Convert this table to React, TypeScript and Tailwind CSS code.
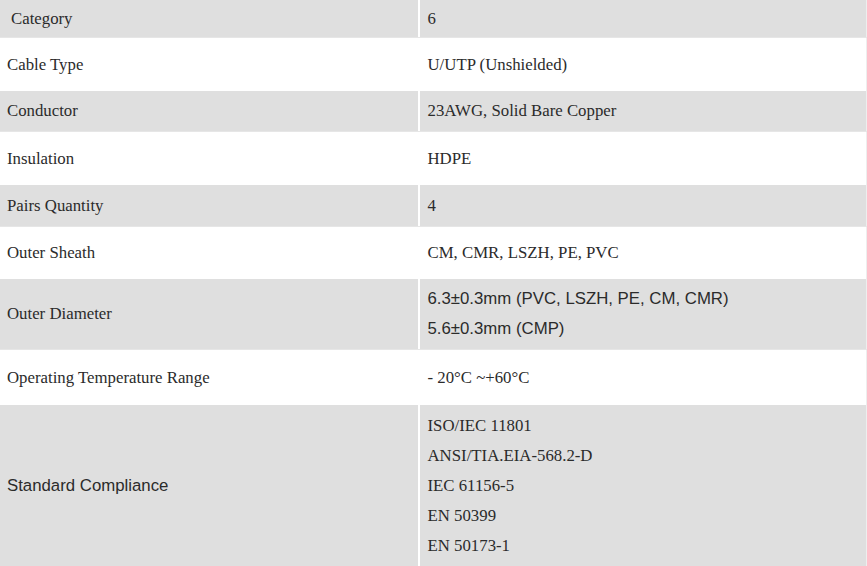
const serif = "font-['Liberation_Serif','Times_New_Roman',serif]";
const sans = "font-['Liberation_Sans',Arial,sans-serif]";

type Row = {
  label: string;
  values: string[];
  height: string;
  gray: boolean;
  labelSans?: boolean;
  valueSans?: boolean;
  labelPad?: string;
};

const rows: Row[] = [
  { label: 'Category', values: ['6'], height: 'h-[38px]', gray: true, labelPad: 'pl-[11px]' },
  { label: 'Cable Type', values: ['U/UTP (Unshielded)'], height: 'h-[53px]', gray: false },
  { label: 'Conductor', values: ['23AWG, Solid Bare Copper'], height: 'h-[41px]', gray: true },
  { label: 'Insulation', values: ['HDPE'], height: 'h-[53px]', gray: false },
  { label: 'Pairs Quantity', values: ['4'], height: 'h-[42px]', gray: true },
  { label: 'Outer Sheath', values: ['CM, CMR, LSZH, PE, PVC'], height: 'h-[52px]', gray: false },
  {
    label: 'Outer Diameter',
    values: ['6.3±0.3mm (PVC, LSZH, PE, CM, CMR)', '5.6±0.3mm (CMP)'],
    height: 'h-[71px]',
    gray: true,
    valueSans: true,
  },
  { label: 'Operating Temperature Range', values: ['- 20°C ~+60°C'], height: 'h-[55px]', gray: false },
  {
    label: 'Standard Compliance',
    values: ['ISO/IEC 11801', 'ANSI/TIA.EIA-568.2-D', 'IEC 61156-5', 'EN 50399', 'EN 50173-1'],
    height: 'h-[162px]',
    gray: true,
    labelSans: true,
  },
];

export default function App() {
  return (
    <div className="w-[867px] h-[566px] overflow-hidden bg-white text-[#2b2b2b] text-[16.8px]">
      {rows.map(row => (
        <div
          key={row.label}
          className={`flex ${row.height} ${row.gray ? 'bg-[#dfdfdf] border-b border-[#e6e6e6]' : 'bg-white'}`}
        >
          <div
            className={`w-[418px] shrink-0 flex items-center ${row.labelPad ?? 'pl-[7px]'} ${
              row.labelSans ? sans : serif
            }`}
          >
            {row.label}
          </div>
          <div className={`w-[1.5px] shrink-0 ${row.gray ? 'bg-white' : ''}`} />
          <div
            className={`flex-1 flex flex-col justify-center pl-[8px] border-r border-[#eeeeee] ${
              row.valueSans ? sans : serif
            }`}
          >
            {row.values.map(v => (
              <div key={v} className={row.values.length > 1 ? 'leading-[30px]' : ''}>
                {v}
              </div>
            ))}
          </div>
        </div>
      ))}
    </div>
  );
}
